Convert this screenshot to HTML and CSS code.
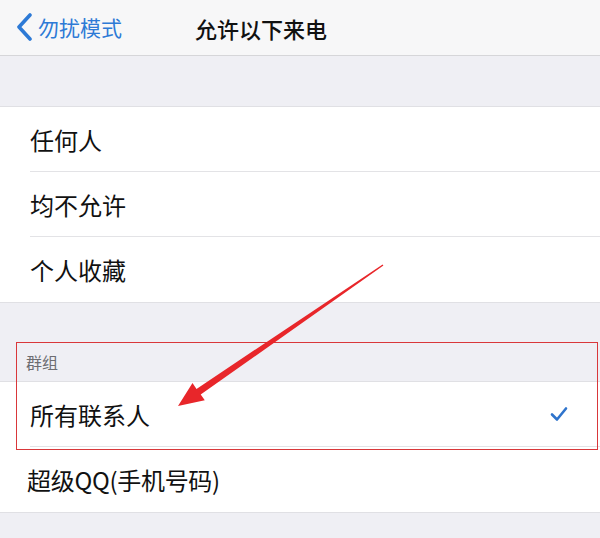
FILE: index.html
```html
<!DOCTYPE html>
<html lang="zh-CN">
<head>
<meta charset="utf-8">
<link rel="stylesheet" href="styles.css">
</head>
<body>
<div class="screen">
  <header class="nav">
    <div class="back">
      <svg class="chev" width="18" height="30" viewBox="0 0 18 30"><path d="M14 2 L3 14 L14 26" fill="none" stroke="#2d7ad6" stroke-width="3.6" stroke-linecap="round" stroke-linejoin="round"/></svg>
      <span class="back-text">勿扰模式</span>
    </div>
    <div class="title">允许以下来电</div>
  </header>
  <div class="gap"></div>
  <ul class="group">
    <li class="row"><span>任何人</span></li>
    <li class="row"><span>均不允许</span></li>
    <li class="row"><span>个人收藏</span></li>
  </ul>
  <div class="gap2"><span class="hdr">群组</span></div>
  <ul class="group">
    <li class="row"><span>所有联系人</span>
      <svg class="check" width="18" height="16" viewBox="0 0 18 16"><path d="M2 8.5 L7 13.5 L16 2.5" fill="none" stroke="#2f74cc" stroke-width="2.6" stroke-linecap="round" stroke-linejoin="round"/></svg>
    </li>
    <li class="row"><span class="qq">超级QQ(手机号码)</span></li>
  </ul>
  <div class="gap3"></div>
  <div class="redbox"></div>
  <svg class="arrow" width="600" height="538" viewBox="0 0 600 538"><polygon points="382.6,264.4 196.5,388.9 192.5,383 178,406 204.8,400.3 200.7,394.6 383.4,265.6" fill="#e8262a"/></svg>
</div>
</body>
</html>
```
FILE: styles.css
```css
* { box-sizing: border-box; margin: 0; padding: 0; }
body { margin: 0; background: #efeff4; font-family: "Noto Sans CJK SC", "Noto Sans", sans-serif; }
.screen { position: relative; width: 600px; height: 538px; overflow: hidden; background: #efeff4; }
.nav { height: 56px; background: #f7f7f8; border-bottom: 1px solid #d6d6d9; display: flex; align-items: center; }
.back { display: flex; align-items: center; padding-left: 16px; gap: 4px; }
.chev { display: block; }
.back-text { color: #2d7ad6; font-size: 21px; line-height: 1; }
.title { margin-left: 73px; font-size: 22px; line-height: 1; color: #111; font-weight: 500; }
.gap { height: 50px; }
.group { list-style: none; background: #fff; border-top: 1px solid #e0e0e4; border-bottom: 1px solid #e0e0e4; padding-left: 30px; }
.row { height: 65px; display: flex; align-items: center; justify-content: space-between; border-bottom: 1px solid #e3e3e6; padding-right: 32px; font-size: 24px; color: #111; }
.row:last-child { border-bottom: none; }
.qq { margin-left: -3px; letter-spacing: -0.3px; }
.gap2 { height: 78px; display: flex; align-items: flex-end; padding: 0 0 11px 26px; }
.hdr { font-size: 16px; color: #6d6d72; line-height: 1; }
.gap3 { height: 30px; }
.redbox { position: absolute; left: 16px; top: 342px; width: 582px; height: 108px; border: 1.5px solid #d9373a; }
.arrow { position: absolute; left: 0; top: 0; }
.check { display: block; }
```
